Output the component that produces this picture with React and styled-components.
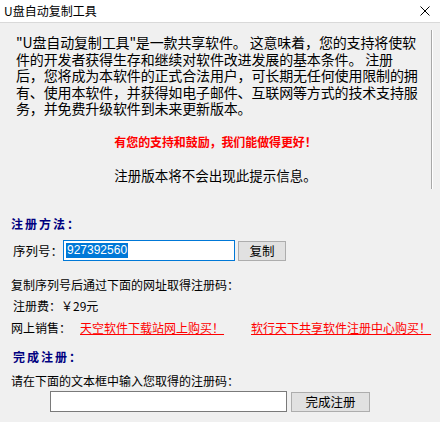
import React from 'react';
import styled, { createGlobalStyle } from 'styled-components';

const GlobalStyle = createGlobalStyle`
  html, body {
    margin: 0;
    padding: 0;
    background: #f0f0f0;
    overflow: hidden;
  }
  body {
    font-family: "Noto Sans CJK SC", "Liberation Sans", sans-serif;
    color: #000;
  }
`;

const Window = styled.div`
  width: 440px;
  height: 422px;
  background: #f0f0f0;
  display: flex;
  flex-direction: column;
  overflow: hidden;
`;

const TitleBar = styled.div`
  height: 22px;
  flex: none;
  background: #fff;
  border-bottom: 1px solid #d9d9d9;
  display: flex;
  align-items: center;
  justify-content: space-between;
  padding: 0 10px 0 4px;
  font-size: 12px;
  line-height: 22px;
`;

const CloseButton = styled.span`
  display: flex;
  width: 10px;
  height: 10px;
  margin-top: -1px;
`;

const Body = styled.div`
  flex: 1;
  display: flex;
  flex-direction: column;
`;

const NoticePanel = styled.div`
  margin-top: 7px;
  width: 432px;
  height: 159px;
  box-sizing: border-box;
  padding: 4px 0 0 16px;
  border-right: 1px solid #a8a8a8;
  box-shadow: 1px 0 0 #ffffff;
`;

const Paragraph = styled.div`
  display: flex;
  flex-direction: column;
`;

const TextLine = styled.span`
  font-size: 14px;
  line-height: 16.5px;
  height: 16.5px;
  letter-spacing: -0.15px;
  white-space: nowrap;
`;

const Cheer = styled.div`
  margin: 17px 16px 0 0;
  text-align: center;
  color: #ff0000;
  font-weight: 700;
  font-size: 12px;
  line-height: 16px;
  letter-spacing: -0.1px;
`;

const Hint = styled.div`
  margin: 16px 16px 0 0;
  text-align: center;
  font-size: 13.5px;
  line-height: 18px;
`;

const Section = styled.div`
  padding-left: 11px;
  display: flex;
  flex-direction: column;
`;

const Heading = styled.div`
  margin-top: ${p => p.$top}px;
  padding-left: ${p => p.$indent || 0}px;
  color: #000080;
  font-weight: 700;
  font-size: 12px;
  line-height: 16px;
  letter-spacing: 2px;
`;

const Line = styled.div`
  margin-top: ${p => p.$top}px;
  padding-left: ${p => p.$indent || 0}px;
  font-size: 12px;
  line-height: 16px;
  display: flex;
  align-items: center;
  white-space: nowrap;
`;

const Row = styled.div`
  margin-top: ${p => p.$top}px;
  padding-left: ${p => p.$indent || 0}px;
  display: flex;
  align-items: center;
  font-size: 12.5px;
`;

const FieldLabel = styled.span`
  width: ${p => p.$width}px;
  flex: none;
  padding-left: 2px;
  box-sizing: border-box;
`;

const TextBox = styled.div`
  width: ${p => p.$width}px;
  height: 21px;
  box-sizing: border-box;
  background: #fff;
  border: 1px solid ${p => (p.$focused ? '#0078d7' : '#7a7a7a')};
  display: flex;
  align-items: center;
  padding-left: 2px;
  font-family: "Liberation Sans", sans-serif;
  font-size: 12px;
`;

const Selected = styled.span`
  background: #0078d7;
  color: #fff;
  line-height: 15px;
  padding: 0 1px;
`;

const Button = styled.button`
  margin-left: ${p => p.$gap}px;
  width: ${p => p.$width}px;
  height: 20px;
  padding: 0;
  background: #e1e1e1;
  border: 1px solid #adadad;
  font-family: "Noto Sans CJK SC", sans-serif;
  font-size: 12.5px;
  line-height: 18px;
  color: #000;
`;

const ShopLink = styled.a`
  margin-left: ${p => p.$gap}px;
  color: #ff0000;
  text-decoration: underline;
  cursor: pointer;
`;

const notice = [
  '"U盘自动复制工具"是一款共享软件。 这意味着，您的支持将使软',
  '件的开发者获得生存和继续对软件改进发展的基本条件。 注册',
  '后，您将成为本软件的正式合法用户，可长期无任何使用限制的拥',
  '有、使用本软件，并获得如电子邮件、互联网等方式的技术支持服',
  '务，并免费升级软件到未来更新版本。',
];

export default function App() {
  return (
    <>
      <GlobalStyle />
      <Window>
        <TitleBar>
          <span>U盘自动复制工具</span>
          <CloseButton>
            <svg width="10" height="10" viewBox="0 0 10 10">
              <path d="M0.5 0.5 L9.5 9.5 M9.5 0.5 L0.5 9.5" stroke="#000" strokeWidth="1" fill="none" />
            </svg>
          </CloseButton>
        </TitleBar>
        <Body>
          <NoticePanel>
            <Paragraph>
              {notice.map(t => (
                <TextLine key={t}>{t}</TextLine>
              ))}
            </Paragraph>
            <Cheer>有您的支持和鼓励，我们能做得更好！</Cheer>
            <Hint>注册版本将不会出现此提示信息。</Hint>
          </NoticePanel>
          <Section>
            <Heading $top={27}>注册方法：</Heading>
            <Row $top={8}>
              <FieldLabel $width={52}>序列号：</FieldLabel>
              <TextBox $width={172} $focused>
                <Selected>927392560</Selected>
              </TextBox>
              <Button $gap={3} $width={48}>复制</Button>
            </Row>
            <Line $top={16}>复制序列号后通过下面的网址取得注册码：</Line>
            <Line $top={5} $indent={2}>注册费：￥29元</Line>
            <Line $top={6}>
              <span>网上销售：</span>
              <ShopLink $gap={9}>天空软件下载站网上购买！</ShopLink>
              <ShopLink $gap={27}>软行天下共享软件注册中心购买！</ShopLink>
            </Line>
            <Heading $top={13} $indent={2}>完成注册：</Heading>
            <Line $top={8}>请在下面的文本框中输入您取得的注册码：</Line>
            <Row $top={2} $indent={39}>
              <TextBox $width={237} />
              <Button $gap={4} $width={79}>完成注册</Button>
            </Row>
          </Section>
        </Body>
      </Window>
    </>
  );
}
